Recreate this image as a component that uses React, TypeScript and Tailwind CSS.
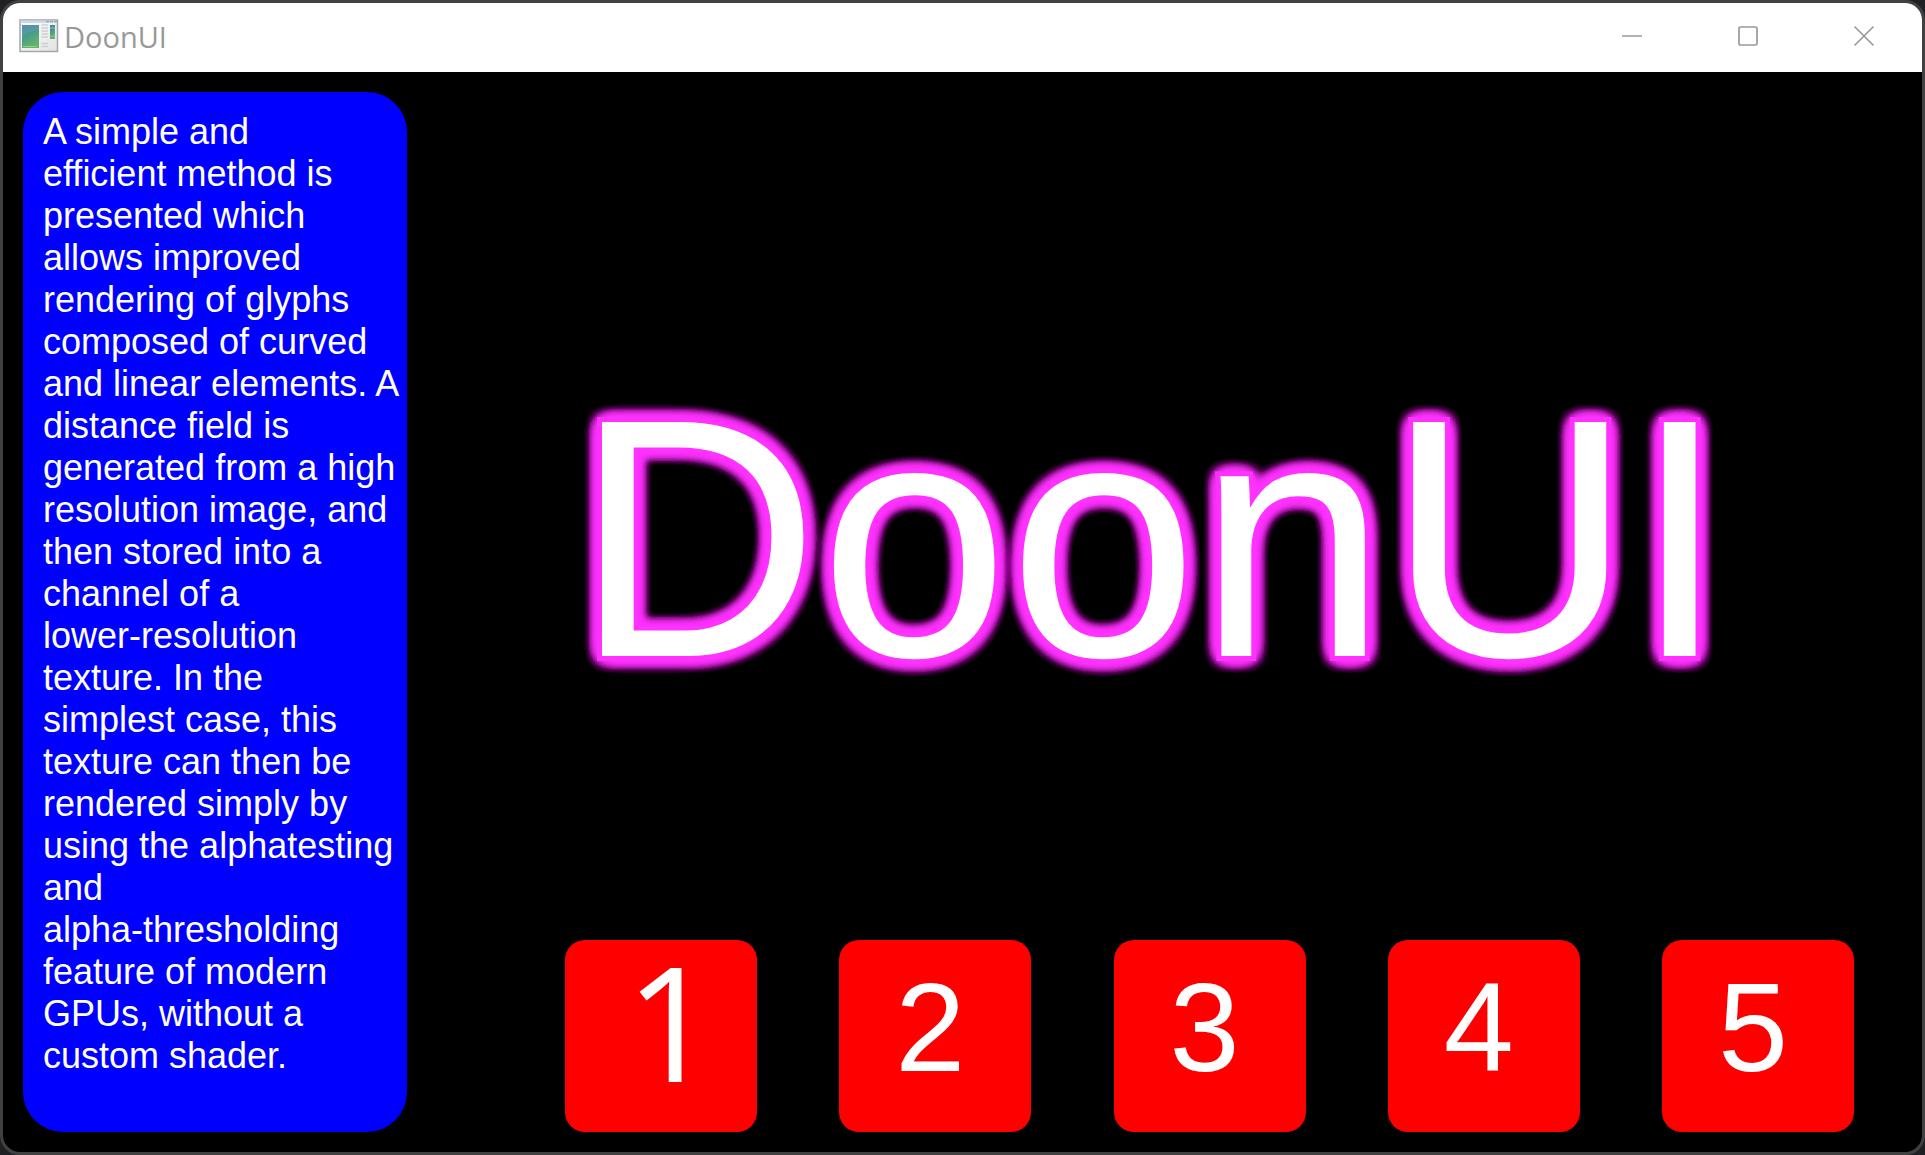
const lines = [
  "A simple and",
  "efficient method is",
  "presented which",
  "allows improved",
  "rendering of glyphs",
  "composed of curved",
  "and linear elements. A",
  "distance field is",
  "generated from a high",
  "resolution image, and",
  "then stored into a",
  "channel of a",
  "lower-resolution",
  "texture. In the",
  "simplest case, this",
  "texture can then be",
  "rendered simply by",
  "using the alphatesting",
  "and",
  "alpha-thresholding",
  "feature of modern",
  "GPUs, without a",
  "custom shader.",
];

function AppIcon() {
  return (
    <svg width="40" height="34" viewBox="0 0 40 34" aria-hidden="true">
      <defs>
        <linearGradient id="pane" x1="0" y1="0" x2="0.4" y2="1">
          <stop offset="0" stopColor="#4a80ad" />
          <stop offset="0.5" stopColor="#4a9a8c" />
          <stop offset="1" stopColor="#62b567" />
        </linearGradient>
        <linearGradient id="frame" x1="0" y1="0" x2="1" y2="1">
          <stop offset="0" stopColor="#ffffff" />
          <stop offset="1" stopColor="#e2e2e4" />
        </linearGradient>
      </defs>
      <rect x="1" y="1" width="37.5" height="31.5" fill="url(#frame)" stroke="#a3a7ab" strokeWidth="1.5" />
      <rect x="1.5" y="1.5" width="36.5" height="2.5" fill="#cdd9e4" />
      <path d="M27 2.5h11" stroke="#9da5ad" strokeWidth="1.5" strokeDasharray="3 1" />
      <rect x="3" y="6" width="17" height="23" fill="url(#pane)" />
      <path d="M3 18C8 13 14 12 20 11V6H3Z" fill="#7baed0" fillOpacity="0.25" />
      <path d="M4 27.5h14" stroke="#8fd28f" strokeWidth="1" />
      <path d="M22.500 6h6.500M22.500 9h6.500M22.500 12h6.500M22.500 15h6.500M22.500 18h6.500M22.500 24.500h6.500M22.500 27.500h6.500" stroke="#cfcfd1" strokeWidth="1.300" />
      <rect x="31" y="6" width="5" height="14" fill="url(#pane)" />
      <path d="M31 9h5M31 17h5" stroke="#9cc3d4" strokeWidth="0.800" />
    </svg>
  );
}

function TitleButton({ label, children }: { label: string; children: React.ReactNode }) {
  return (
    <button type="button" aria-label={label} className="flex w-[116px] items-center justify-center">
      <svg width="22" height="22" viewBox="0 0 22 22" fill="none" stroke="#999999" strokeWidth="1.700" aria-hidden="true">
        {children}
      </svg>
    </button>
  );
}

export default function App() {
  return (
    <div className="min-h-screen bg-[#1f2023]">
      <div className="flex min-h-screen flex-col overflow-hidden rounded-[20px] border-[3px] border-[#414142] bg-black">
        <header className="flex h-[69px] justify-between bg-white pb-[3px]">
          <div className="flex items-center gap-[5px] pl-4">
            <AppIcon />
            <span className="pt-0.5 font-['Open_Sans',sans-serif] text-[29px] leading-8 text-[#999999]">DoonUI</span>
          </div>
          <div className="flex">
            <TitleButton label="Minimize">
              <path d="M1 11h20" />
            </TitleButton>
            <TitleButton label="Maximize">
              <rect x="2" y="2" width="18" height="18" rx="1.500" />
            </TitleButton>
            <TitleButton label="Close">
              <path d="M1.500 1.500l19 19M20.500 1.500l-19 19" />
            </TitleButton>
          </div>
        </header>
        <main className="flex flex-1 p-5 font-['Liberation_Sans',Arial,sans-serif] text-white">
          <aside className="w-[384px] shrink-0 rounded-[40px] bg-[#0000ff] pt-[19px] pl-5">
            <p className="text-4xl leading-[42px] whitespace-nowrap">
              {lines.map((line) => (
                <span key={line} className="block">
                  {line}{" "}
                </span>
              ))}
            </p>
          </aside>
          <section className="flex flex-1 flex-col">
            <div className="flex flex-1 items-center justify-center pt-11 pr-2">
              <h1 className="text-[340px] leading-none [-webkit-text-stroke:10px_#ff33ff] [paint-order:stroke_fill] [text-shadow:0_0_16px_#ff33ff,0_0_16px_#ff33ff,0_0_16px_#ff33ff,0_0_16px_#ff33ff,0_0_16px_#ff33ff,0_0_16px_#ff33ff,0_0_16px_#ff33ff,0_0_16px_#ff33ff,0_0_16px_#ff33ff,0_0_16px_#ff33ff,0_0_16px_#ff33ff,0_0_16px_#ff33ff,0_0_16px_#ff33ff,0_0_16px_#ff33ff,0_0_16px_#ff33ff,0_0_16px_#ff33ff]">
                DoonUI
              </h1>
            </div>
            <div className="flex justify-between pr-12 pl-[158px]">
              {[1, 2, 3, 4, 5].map((n) => (
                <button
                  key={n}
                  type="button"
                  className={
                    n === 1
                      ? "flex size-48 items-center justify-center rounded-[20px] bg-[#ff0000] pb-8 pl-5 font-['Open_Sans',sans-serif] text-[160px] leading-none"
                      : "flex size-48 items-center justify-center rounded-[20px] bg-[#ff0000] pr-2.5 pb-4 text-[126px] leading-none"
                  }
                >
                  {n}
                </button>
              ))}
            </div>
          </section>
        </main>
      </div>
    </div>
  );
}
